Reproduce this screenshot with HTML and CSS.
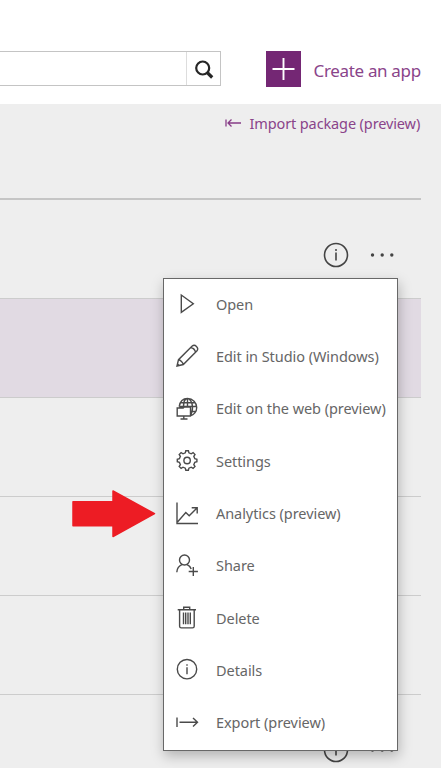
FILE: index.html
```
<!DOCTYPE html>
<html lang="en">
<head>
<meta charset="utf-8">
<title>Apps</title>
<link rel="stylesheet" href="styles.css">
</head>
<body>
<header class="topbar">
  <div class="search">
    <div class="search-field"></div>
    <button class="search-button" aria-label="Search"><svg width="34" height="34" viewBox="0 0 34 34"><circle cx="15.700" cy="16" r="6.500" fill="none" stroke="#262626" stroke-width="2.200"/><path d="M20.200 20.500l5 5" stroke="#262626" stroke-width="3.200"/></svg></button>
  </div>
  <a class="create"><svg width="35" height="36" viewBox="0 0 35 36"><path fill="#742774" d="M0 0h35v36H0z"/><path d="M17.500 7v22M6.500 18h22" stroke="#fff" stroke-width="1.900"/></svg><span class="create-label">Create an app</span></a>
</header>
<main class="content">
  <div class="import"><svg width="17" height="10" viewBox="0 0 17 10" fill="none" stroke="#873d87" stroke-width="1.300"><path d="M1 1.500v7M3 5h13M6.500 1.500L3 5l3.500 3.500"/></svg><span class="import-label">Import package (preview)</span></div>
  <div class="list">
    <div class="row"><svg class="row-info" width="26" height="26" viewBox="0 0 26 26"><circle cx="13" cy="13" r="11.500" fill="none" stroke="#444" stroke-width="1.600"/><path d="M13 10.500v8" stroke="#444" stroke-width="1.600"/><circle cx="13" cy="8" r="1" fill="#444"/></svg><svg width="26" height="6" viewBox="0 0 26 6" fill="#444"><circle cx="3.500" cy="3" r="1.700"/><circle cx="13.200" cy="3" r="1.700"/><circle cx="22.800" cy="3" r="1.700"/></svg></div>
    <div class="row selected"></div>
    <div class="row"></div>
    <div class="row"></div>
    <div class="row"></div>
    <div class="row last"><svg class="row-info" width="26" height="26" viewBox="0 0 26 26"><circle cx="13" cy="13" r="11.500" fill="none" stroke="#444" stroke-width="1.600"/><path d="M13 10.500v8" stroke="#444" stroke-width="1.600"/></svg><svg width="26" height="6" viewBox="0 0 26 6" fill="#444"><circle cx="3.500" cy="3" r="1.700"/><circle cx="13.200" cy="3" r="1.700"/><circle cx="22.800" cy="3" r="1.700"/></svg></div>
  </div>
</main>
<svg class="pointer" width="84" height="48" viewBox="0 0 84 48"><path d="M1 11.800h40V1l41.500 22.700L41 46.500V35.700H1z" fill="#ed1c24" stroke="#ed1c24" stroke-width="1.500" stroke-linejoin="round"/></svg>
<nav class="menu">
  <a class="item"><svg class="icon" viewBox="0 0 24 24"><path d="M6.300 3v17.300L18.300 11.700z"/></svg><span class="label">Open</span></a>
  <a class="item"><svg class="icon" viewBox="0 0 24 24"><path d="M2 22l1.500-6.300L17.200 2c2.800-2.300 7 1.900 4.800 4.700L8.300 20.500zM3.500 15.700c2 .3 4.400 2.600 4.800 4.800M15.800 3.500c2.100.5 4.300 2.700 4.800 4.800M2.300 19.800l1.900 1.700"/></svg><span class="label">Edit in Studio (Windows)</span></a>
  <a class="item"><svg class="icon" viewBox="0 0 24 24"><path d="M4.200 9.500C5 4.500 8 1.500 12.500 1.500c5.300 0 9.200 4.200 9.200 9 0 4.200-2.800 7.400-6.300 8.200M8.500 9.500C8.500 5 10 1.500 12.500 1.500s5 4 5 9c0 3-.8 6.200-2.300 8M12.500 1.500V10M5.800 5.800h14M4.200 9.500h17.500M15.500 14.500h5M2.200 11h6l1-1h6.300v9H2.200zM8.800 19v2.800M5.500 22h7"/></svg><span class="label">Edit on the web (preview)</span></a>
  <a class="item"><svg class="icon" viewBox="0 0 24 24"><path d="M10.700 2.500h2.600l.5 2.100 2.300 1L18 4.400 19.900 6.300l-1.200 1.900 1 2.300 2.100.5v2.600l-2.100.5-1 2.300 1.200 1.900L18 20.200 16.100 19l-2.300 1-.5 2.100h-2.600l-.5-2.100-2.300-1L6 20.200l-1.900-1.900 1.200-1.900-1-2.300-2.100-.5V11l2.100-.5 1-2.300-1.200-1.900L6 4.400l1.900 1.200 2.300-1z" transform="translate(.1 -.8)"/><circle cx="12.100" cy="11.500" r="3.200"/></svg><span class="label">Settings</span></a>
  <a class="item"><svg class="icon" viewBox="0 0 24 24"><path d="M2 1.500v21h21M2.500 21l8.300-9.500 3.400 3.200L22 7M16.700 6.800h5.500v5.700"/></svg><span class="label">Analytics (preview)</span></a>
  <a class="item"><svg class="icon" viewBox="0 0 24 24"><circle cx="9.500" cy="6" r="5"/><path d="M1.800 18.200c.2-3.400 2.200-6.400 5.500-7.800M11.700 10.400c2.100.9 3.700 2.400 4.500 4.600M18.300 13V22M13.700 17.500h9.200"/></svg><span class="label">Share</span></a>
  <a class="item"><svg class="icon" viewBox="0 0 24 24"><path d="M2.700 3.700h18.300M8.700 3.700V1.200h6v2.500M4.600 3.700v16.500c0 1 .7 1.700 1.700 1.700h11.200c1 0 1.700-.7 1.700-1.700V3.700M8.500 6.500v11.700M10.700 6.500v11.700M13 6.500v11.700M15.300 6.500v11.700"/></svg><span class="label">Delete</span></a>
  <a class="item"><svg class="icon" viewBox="0 0 24 24"><circle cx="12" cy="11.200" r="9.700"/><path d="M12 9.200v7M12 6.200v1.500"/></svg><span class="label">Details</span></a>
  <a class="item"><svg class="icon" viewBox="0 0 24 24"><path d="M2 6.500V16M4.500 11.200h18M18 6.900l4.500 4.300L18 15.500"/></svg><span class="label">Export (preview)</span></a>
</nav>
</body>
</html>
```
FILE: styles.css
```
* { box-sizing: border-box; }
body { margin: 0; height: 768px; overflow: hidden; position: relative; background: #eee; font-family: "Noto Sans", "Open Sans", sans-serif; color: #666; }
svg { display: block; flex: none; }
.topbar { height: 104px; padding-top: 51px; background: #fff; display: flex; align-items: flex-start; }
.search { width: 221px; height: 35px; border: 1px solid #c4c4c4; border-left: 0; display: flex; }
.search-field { flex: 1; }
.search-button { width: 34px; height: 33px; padding: 0; border: 0; border-left: 1px solid #ddd; background: #fff; }
.create { display: flex; margin-left: 44.5px; align-items: center; color: #8a448a; }
.create-label { margin-left: 13px; font-size: 17px; line-height: 24px; padding-top: 3px; white-space: nowrap; letter-spacing: -.33px; }
.import { height: 94px; padding: 8px 0 0 225px; display: flex; align-items: flex-start; color: #8a448a; }
.import svg { margin-top: 6px; }
.import-label { margin-left: 7.500px; font-size: 14.500px; line-height: 23px; white-space: nowrap; letter-spacing: -.12px; }
.list { width: 421px; border-top: 2px solid #c5c5c5; }
.row { height: 99px; border-bottom: 1px solid #ccc; display: flex; justify-content: flex-end; align-items: center; padding: 12px 26.500px 0 0; }
.row-info { margin-right: 20px; }
.selected { background: #e1dae3; }
.last { border: 0; padding-top: 11px; }
.pointer { position: absolute; left: 72px; top: 490px; }
.menu { position: absolute; left: 163px; top: 278px; width: 235px; height: 473px; border: 1.500px solid #686868; background: #fff; box-shadow: 1px 5px 12px rgba(0,0,0,.25); }
.item { display: flex; height: 52.330px; align-items: center; padding: 0 0 2px 11px; }
.icon { width: 24px; height: 24px; fill: none; stroke: #4a4a4a; stroke-width: 1.400; }
.label { margin: -1px 0 0 17px; font-size: 14.500px; line-height: 24px; white-space: nowrap; letter-spacing: -.06px; }
```
